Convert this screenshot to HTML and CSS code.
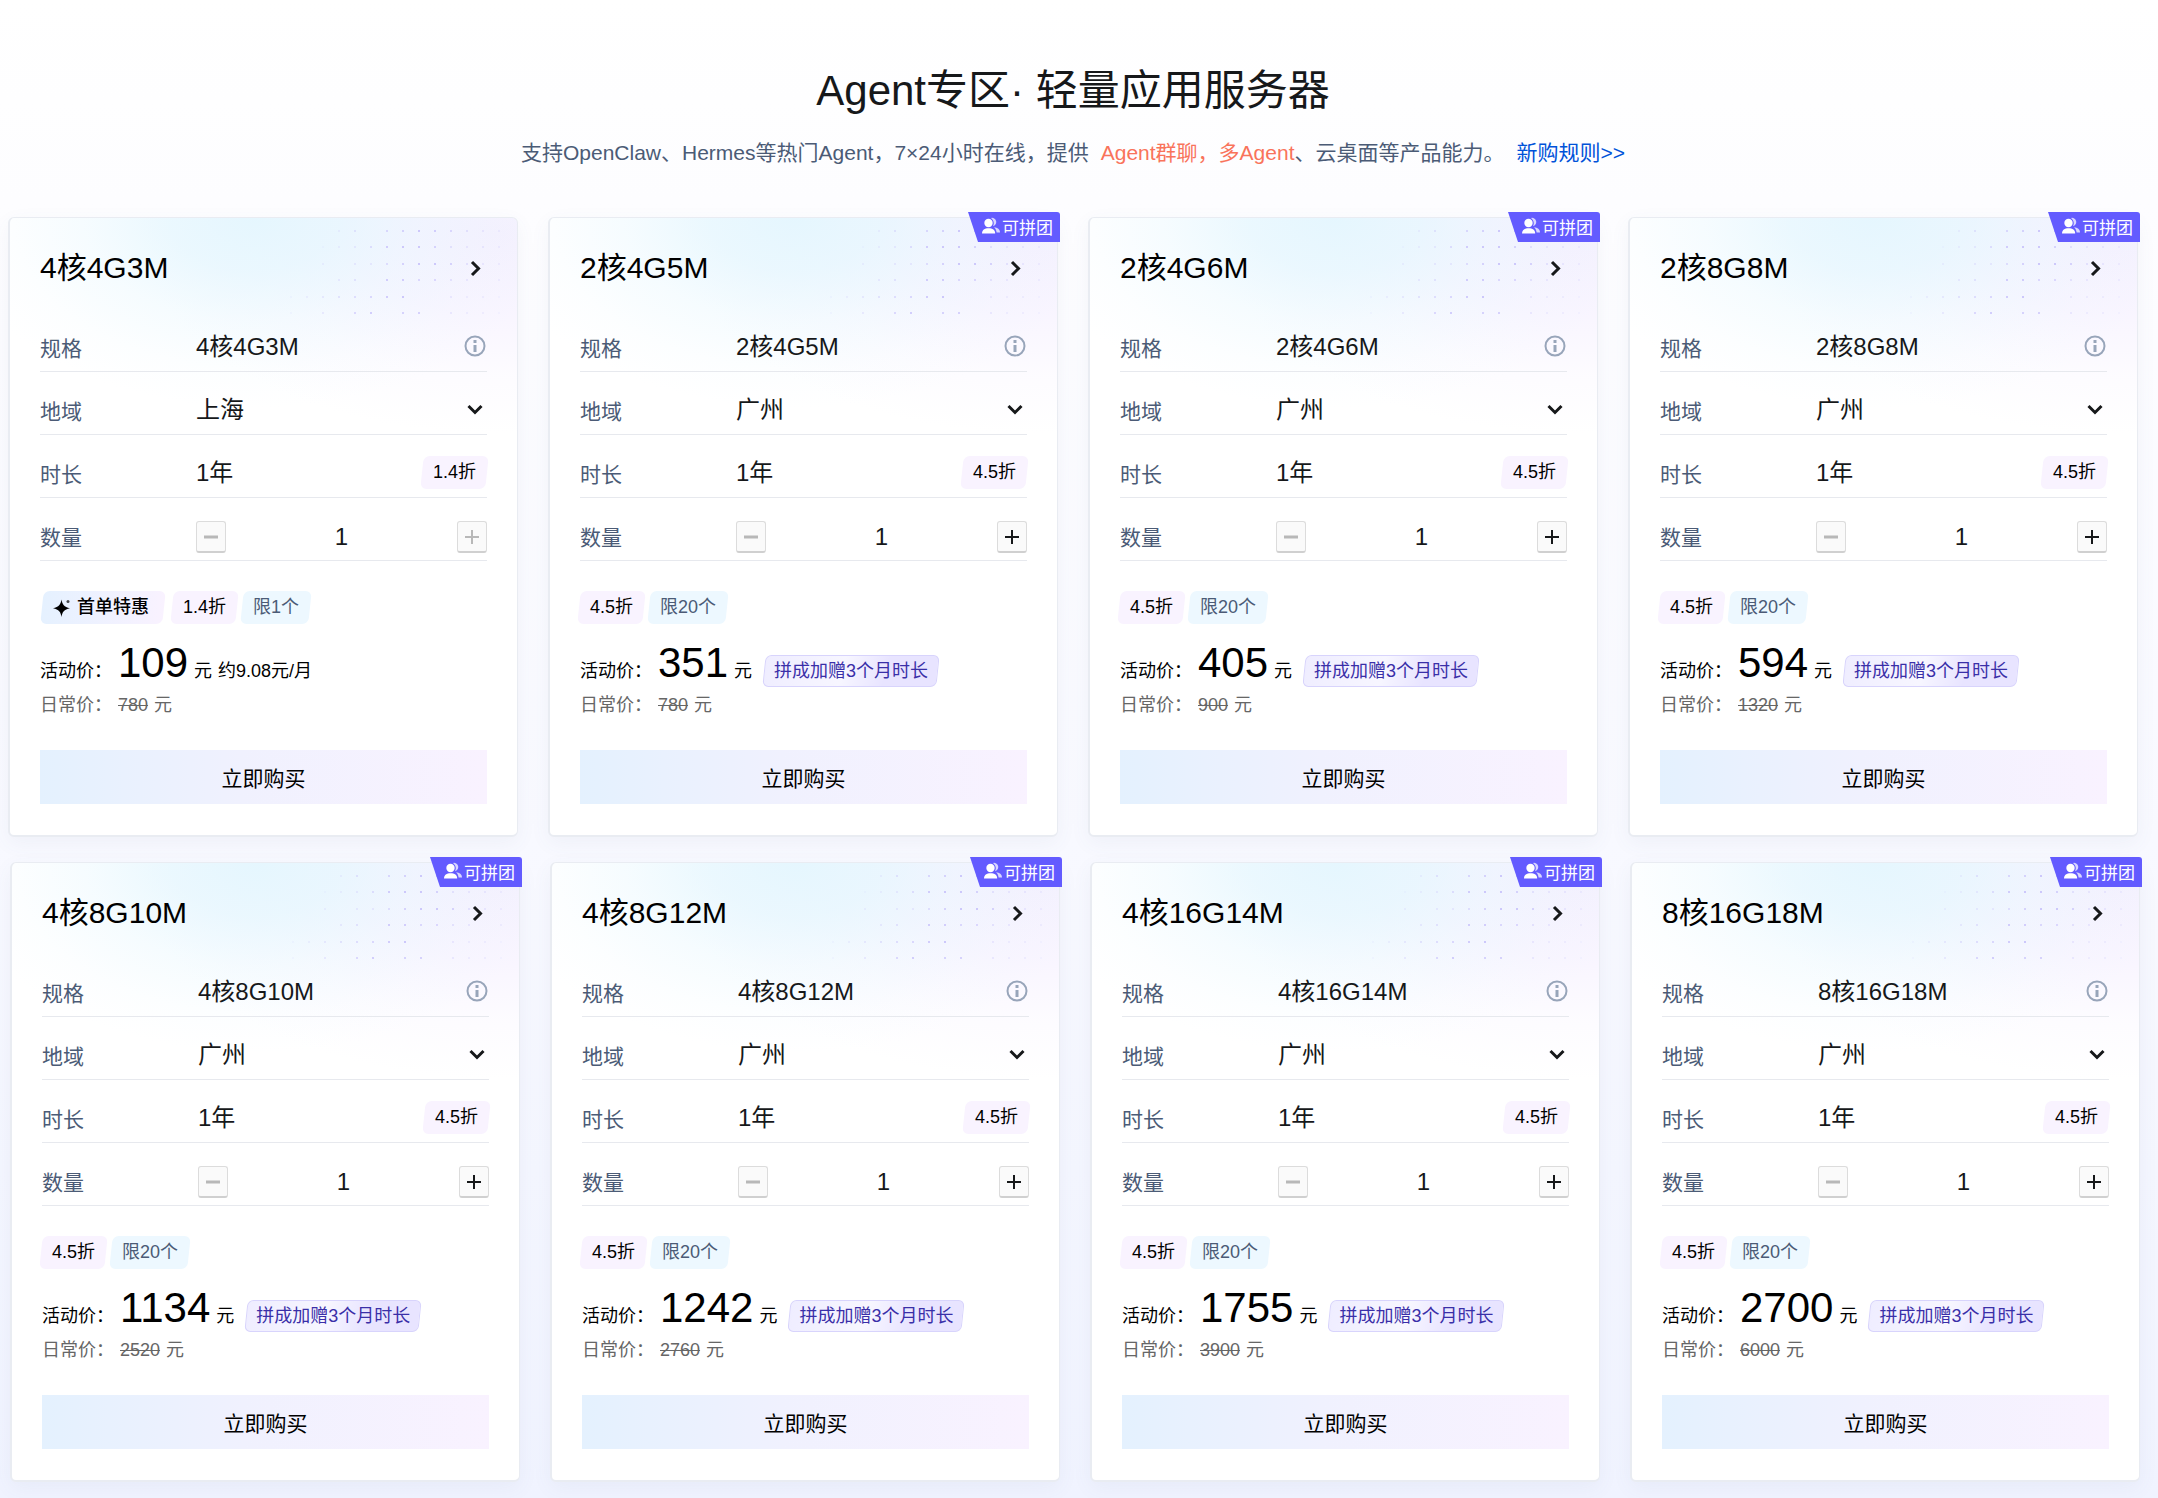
FILE: index.html
```html
<!DOCTYPE html>
<html lang="zh-CN">
<head>
  <meta charset="UTF-8">
  <meta name="viewport" content="width=device-width, initial-scale=1">
  <title>Agent专区· 轻量应用服务器</title>
  <link rel="stylesheet" href="styles.css">
</head>
<body>

  <header class="hero">
    <h1>Agent专区· 轻量应用服务器</h1>
    <p>
      支持OpenClaw、Hermes等热门Agent，7×24小时在线，提供<span class="hot">Agent群聊，多Agent</span>、云桌面等产品能力。<a class="rules" href="#rules">新购规则&gt;&gt;</a>
    </p>
  </header>

  <main>
    <section class="row" id="row-1"></section>
    <section class="row row-next" id="row-2"></section>
  </main>

  <script src="script.js"></script>
</body>
</html>
```

FILE: styles.css
```css
:root {
  --text: #000;
  --value: #16181a;
  --label: #4b5b76;
  --muted: #666;
  --line: #e7e9ee;
  --link: #0052d9;
  --hot: #f9735b;
  --group: #635bff;
  --lilac: #f9f3ff;
  --sky: #edf8ff;
}

* {
  box-sizing: border-box;
}

body {
  margin: 0;
  min-height: 100vh;
  font-family: "Liberation Sans", "Noto Sans CJK SC", sans-serif;
  font-size: 18px;
  color: var(--text);
  background: linear-gradient(#fff 0, #fdfdff 200px, #f8f9ff 840px, #f0f3ff 100%);
}

button,
input,
select {
  margin: 0;
  padding: 0;
  border: 0;
  background: none;
  font: inherit;
  color: inherit;
}

button,
select {
  cursor: pointer;
}

/* hero */
.hero {
  padding: 61px 20px 48px 8px;
  text-align: center;
}

.hero h1 {
  margin: 0 0 16px;
  font-size: 42px;
  font-weight: 400;
  line-height: 60px;
  color: var(--value);
}

.hero p {
  margin: 0;
  font-size: 21px;
  line-height: 32px;
  color: var(--label);
}

.hot {
  margin-left: 12px;
  color: var(--hot);
}

.rules {
  margin-left: 12px;
  color: var(--link);
  text-decoration: none;
}

/* card grid */
.row {
  display: grid;
  grid-template-columns: repeat(4, 1fr);
  gap: 30px;
  padding: 0 20px 25px 8px;
}

.row-next {
  padding: 0 18px 15px 10px;
}

.card {
  position: relative;
  padding: 24px 30px 31px;
  border: 1px solid #e9ecf2;
  border-width: 1px 1px 2px 2px;
  border-radius: 6px;
  background:
    radial-gradient(ellipse 60% 190px at 48% 0, rgba(228, 246, 254, 0.95), rgba(228, 246, 254, 0.75) 28%, rgba(228, 246, 254, 0.35) 55%, rgba(228, 246, 254, 0.1) 80%, rgba(228, 246, 254, 0)),
    radial-gradient(ellipse 70% 200px at 96% 16px, #f4f0fe, rgba(246, 241, 255, 0.7) 40%, rgba(246, 241, 255, 0.25) 70%, rgba(246, 241, 255, 0)),
    #fff;
  box-shadow: 0 6px 20px rgba(80, 95, 140, 0.06);
}

.dots {
  position: absolute;
  top: 0;
  right: 0;
  width: 230px;
  height: 104px;
  fill: #c9c3fb;
}

.group {
  position: absolute;
  top: -6px;
  right: -3px;
  display: flex;
  align-items: center;
  justify-content: flex-end;
  gap: 2px;
  width: 92px;
  height: 30px;
  padding: 0 7px 2px 0;
  border-radius: 0 3px 0 0;
  background: var(--group);
  clip-path: polygon(0 0, 100% 0, 100% 100%, 10px 100%);
  font-size: 17px;
  color: #fff;
}

.group svg {
  width: 18px;
  height: 18px;
  fill: #fff;
}

.card-head {
  position: relative;
  display: flex;
  align-items: center;
  justify-content: space-between;
  margin-bottom: 15px;
}

.card-head h2 {
  margin: 0;
  font-size: 30px;
  font-weight: 400;
  line-height: 52px;
}

.icon-btn {
  display: flex;
}

.icon {
  display: block;
  width: 24px;
  height: 24px;
  fill: none;
  stroke: var(--value);
  stroke-width: 3;
}

.icon.info {
  stroke: #98a5ba;
  stroke-width: 2;
}

/* config rows */
.field {
  position: relative;
  display: grid;
  grid-template-columns: 156px 1fr auto;
  align-items: center;
  height: 63px;
  padding-top: 12px;
  border-bottom: 1px solid var(--line);
}

.field .name {
  padding-top: 1px;
  font-size: 21px;
  color: var(--label);
}

.field .value {
  font-size: 24px;
  color: var(--value);
}

.field span.value {
  padding-bottom: 4px;
}

.picker {
  grid-column: 2 / 4;
  display: grid;
  align-items: center;
}

.picker select {
  grid-area: 1 / 1;
  appearance: none;
  width: 100%;
  height: 40px;
}

.picker .icon {
  grid-area: 1 / 1;
  justify-self: end;
  pointer-events: none;
}

.stepper {
  grid-column: 2 / 4;
  display: flex;
  align-items: center;
  padding-top: 4px;
}

.stepper input {
  flex: 1;
  width: 0;
  text-align: center;
}

.stepper button {
  display: flex;
  align-items: center;
  justify-content: center;
  width: 30px;
  height: 32px;
  border: 1px solid #dcdcdc;
  border-bottom: 2px solid #d0d0d0;
  border-radius: 3px;
  background: #fafafa;
}

.stepper svg {
  width: 14px;
  height: 14px;
  fill: none;
  stroke: var(--value);
  stroke-width: 2;
}

.stepper button:disabled {
  cursor: default;
}

.stepper button:disabled svg {
  stroke: #b8b8b8;
}

/* slanted tags */
.tags {
  display: flex;
  gap: 5px;
  margin: 30px 0 0 -1px;
}

.tag {
  position: relative;
  z-index: 0;
  padding: 0 11px;
  line-height: 33px;
  white-space: nowrap;
}

.tag::before {
  content: "";
  position: absolute;
  inset: 0;
  z-index: -1;
  border-radius: 6px;
  background: var(--lilac);
  transform: skewX(-6deg);
}

.tag.limit {
  color: var(--label);
}

.tag.limit::before {
  background: var(--sky);
}

.tag.first {
  display: flex;
  align-items: center;
  gap: 6px;
  margin: 0 3px;
  padding-right: 15px;
  font-weight: 500;
}

.tag.first::before {
  background: linear-gradient(90deg, #e5f1ff, #f9f2ff);
}

.tag.first svg {
  width: 18px;
  height: 20px;
}

/* prices */
.price {
  display: flex;
  align-items: baseline;
  gap: 6px;
  margin-top: 15px;
  line-height: 30px;
  white-space: nowrap;
}

.price strong {
  font-size: 42px;
  font-weight: 400;
  line-height: 48px;
}

.gift {
  margin-left: 6px;
  padding: 0 10px;
  color: #3a2fa8;
  line-height: 32px;
}

.gift::before {
  border: 1px solid #d8d4fc;
  background: linear-gradient(100deg, #efedff, #f7f6ff 45%, #e8e4ff 70%, #e8e4ff);
}

.daily {
  display: flex;
  gap: 6px;
  margin-top: 4px;
  line-height: 28px;
  color: var(--muted);
}

.buy {
  display: block;
  width: 100%;
  height: 54px;
  margin-top: 31px;
  background: linear-gradient(90deg, #e4f1fe, #f0f1fe 45%, #f9f2ff);
  font-size: 21px;
}
```

FILE: script.js
```js
const servers = [
  { name: '4核4G3M', region: '上海', off: '1.4折', limit: 1, price: 109, daily: 780, monthly: '约9.08元/月', first: true },
  { name: '2核4G5M', region: '广州', off: '4.5折', limit: 20, price: 351, daily: 780 },
  { name: '2核4G6M', region: '广州', off: '4.5折', limit: 20, price: 405, daily: 900 },
  { name: '2核8G8M', region: '广州', off: '4.5折', limit: 20, price: 594, daily: 1320 },
  { name: '4核8G10M', region: '广州', off: '4.5折', limit: 20, price: 1134, daily: 2520 },
  { name: '4核8G12M', region: '广州', off: '4.5折', limit: 20, price: 1242, daily: 2760 },
  { name: '4核16G14M', region: '广州', off: '4.5折', limit: 20, price: 1755, daily: 3900 },
  { name: '8核16G18M', region: '广州', off: '4.5折', limit: 20, price: 2700, daily: 6000 }
];

// dot opacity in tenths, one digit per column
const dotRows = [
  '00024067986432',
  '00123589974332',
  '00203357997432',
  '00034088664302',
  '12345689003221',
  '10306807703221'
];

function dots() {
  let out = '';
  dotRows.forEach((row, y) => {
    [...row].forEach((level, x) => {
      if (level !== '0') {
        out += `<rect x="${3 + x * 16}" y="${12 + Math.round(y * 16.4)}" width="2" height="2" opacity="0.${level}"/>`;
      }
    });
  });
  return `<svg class="dots" viewBox="0 0 230 104" aria-hidden="true">${out}</svg>`;
}

const groupBadge = `
  <span class="group">
    <svg viewBox="0 0 18 18" aria-hidden="true">
      <g opacity="0.75">
        <path d="M9 1a4.200 4.200 0 1 1 2 8.200c1.500-3 .8-6-2-8.200z"/>
        <path d="M12 10.300c3.600.2 6 2 6 5.200h-3.400c-.2-2.200-1.100-3.800-2.600-5.200z"/>
      </g>
      <circle cx="6.500" cy="6" r="4.200"/>
      <path d="M0 16.500c0-3.600 2.600-5.300 6.600-5.300s6.600 1.700 6.600 5.300z"/>
    </svg>可拼团
  </span>`;

const firstTag = `
  <span class="tag first">
    <svg viewBox="0 0 18 20" aria-hidden="true">
      <path d="M8.500 1.500c.8 5 2.500 7.400 8.500 8.700c-6 1.300-7.700 3.700-8.500 8.700c-.8-5-2.500-7.400-8.500-8.700c6-1.300 7.700-3.700 8.500-8.700z"/>
      <circle cx="15" cy="3.500" r="1.500" opacity="0.7"/>
    </svg>首单特惠
  </span>`;

function card(s, i) {
  return `
    <article class="card">
      ${dots()}
      ${s.first ? '' : groupBadge}
      <div class="card-head">
        <h2>${s.name}</h2>
        <button class="icon-btn" aria-label="查看详情">
          <svg class="icon" viewBox="0 0 24 24"><path d="M9 6l6.500 6.500L9 19"/></svg>
        </button>
      </div>
      <div class="field">
        <span class="name">规格</span>
        <span class="value">${s.name}</span>
        <button class="icon-btn" aria-label="规格说明">
          <svg class="icon info" viewBox="0 0 24 24">
            <circle cx="12" cy="12" r="9.500"/>
            <path d="M12 6v3M12 11v7" stroke-width="3"/>
          </svg>
        </button>
      </div>
      <div class="field">
        <label class="name" for="region-${i}">地域</label>
        <div class="picker value">
          <select id="region-${i}"><option>${s.region}</option></select>
          <svg class="icon" viewBox="0 0 24 24"><path d="M5.500 9l6.500 6.500L18.500 9"/></svg>
        </div>
      </div>
      <div class="field">
        <span class="name">时长</span>
        <span class="value">1年</span>
        <span class="tag">${s.off}</span>
      </div>
      <div class="field">
        <label class="name" for="count-${i}">数量</label>
        <div class="stepper value" data-max="${s.limit}">
          <button data-step="-1" aria-label="减少" disabled>
            <svg viewBox="0 0 14 14"><path d="M0 7h14" stroke-width="3"/></svg>
          </button>
          <input type="text" id="count-${i}" value="1" readonly>
          <button data-step="1" aria-label="增加"${s.limit === 1 ? ' disabled' : ''}>
            <svg viewBox="0 0 14 14"><path d="M0 7h14M7 0v14"/></svg>
          </button>
        </div>
      </div>
      <div class="tags">
        ${s.first ? firstTag : ''}
        <span class="tag">${s.off}</span>
        <span class="tag limit">限${s.limit}个</span>
      </div>
      <div class="price">
        <span>活动价：</span><strong>${s.price}</strong><span>元</span>
        ${s.monthly ? `<span>${s.monthly}</span>` : '<span class="tag gift">拼成加赠3个月时长</span>'}
      </div>
      <div class="daily">
        <span>日常价：</span><s>${s.daily}</s><span>元</span>
      </div>
      <button class="buy">立即购买</button>
    </article>`;
}

const cards = servers.map(card);
document.getElementById('row-1').innerHTML = cards.slice(0, 4).join('');
document.getElementById('row-2').innerHTML = cards.slice(4).join('');

document.querySelectorAll('.stepper').forEach(stepper => {
  const input = stepper.querySelector('input');
  const [minus, plus] = stepper.querySelectorAll('button');
  const max = Number(stepper.dataset.max);

  stepper.addEventListener('click', e => {
    const btn = e.target.closest('button');
    if (!btn) return;
    const next = Number(input.value) + Number(btn.dataset.step);
    input.value = Math.min(max, Math.max(1, next));
    minus.disabled = Number(input.value) === 1;
    plus.disabled = Number(input.value) === max;
  });
});
```
